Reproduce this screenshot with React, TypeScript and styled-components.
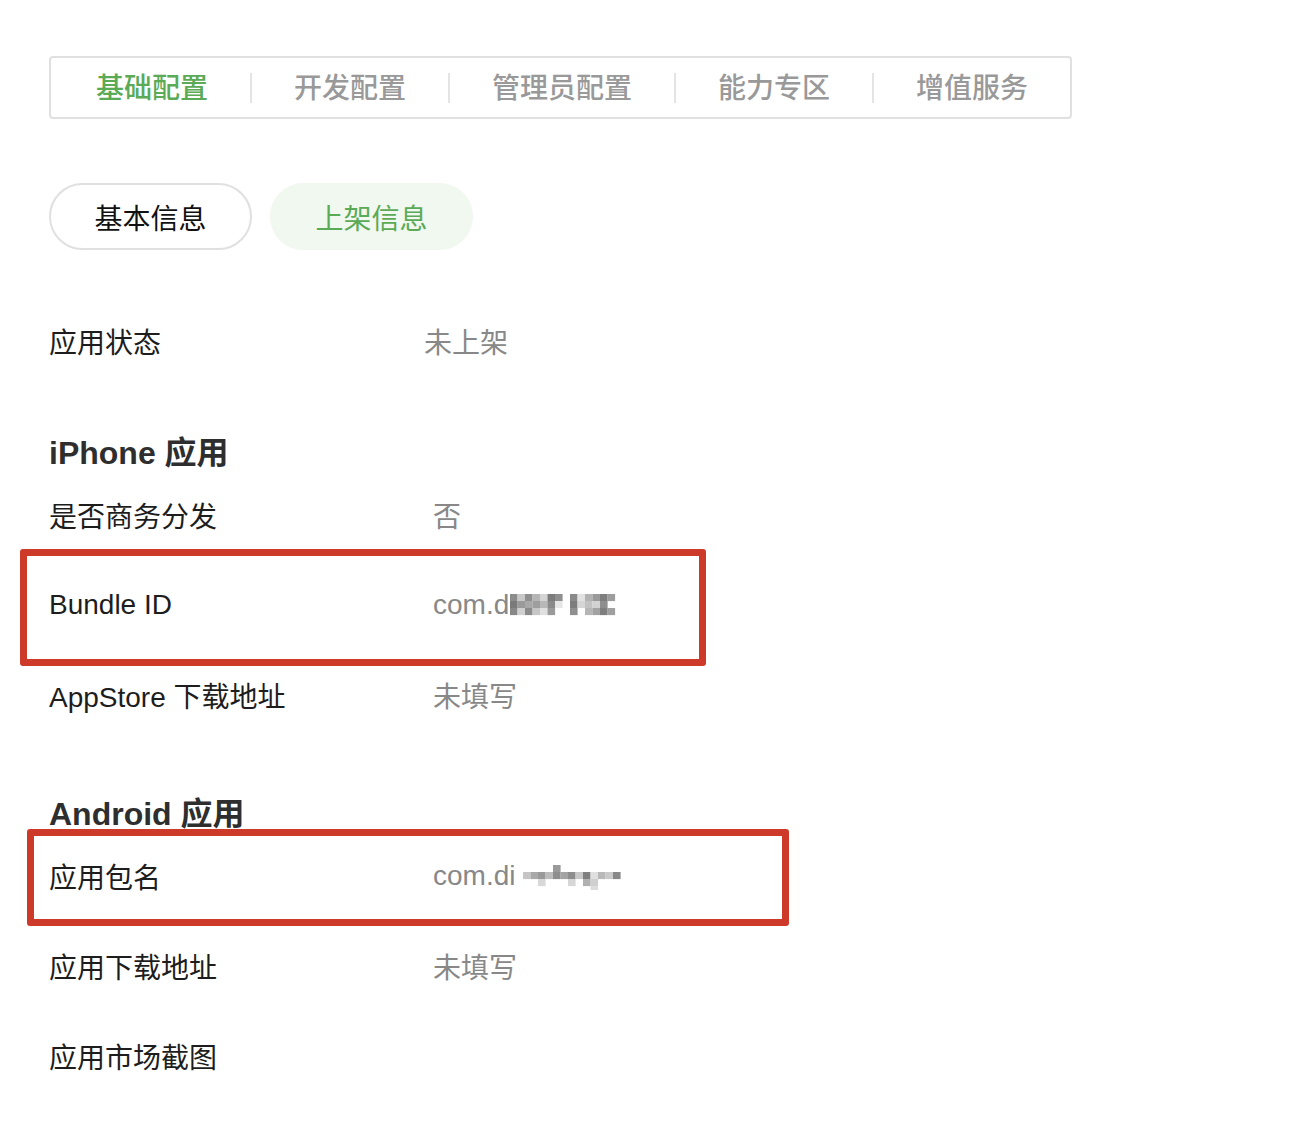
import { Fragment } from 'react';
import styled, { createGlobalStyle } from 'styled-components';

const GlobalStyle = createGlobalStyle`
  html, body {
    margin: 0;
    padding: 0;
    background: #ffffff;
  }
  body {
    font-family: "Liberation Sans", "Noto Sans CJK SC", sans-serif;
    -webkit-font-smoothing: antialiased;
  }
`;

const Page = styled.div`
  position: relative;
  width: 1312px;
  min-height: 1122px;
  padding: 56px 0 0 49px;
  box-sizing: border-box;
`;

const TabBar = styled.div`
  display: flex;
  align-items: center;
  width: 1023px;
  height: 63px;
  box-sizing: border-box;
  border: 2px solid #e0e0e0;
  border-radius: 4px;
  padding: 3px 0 0 3px;
`;

const Tab = styled.div<{ $active?: boolean }>`
  padding: 0 42px;
  font-size: 28px;
  line-height: 34px;
  font-weight: 500;
  color: ${(p) => (p.$active ? '#5aaa56' : '#999999')};
  white-space: nowrap;
`;

const TabDivider = styled.span`
  flex: none;
  width: 2px;
  height: 30px;
  margin-top: -2px;
  background: #e4e4e4;
`;

const PillRow = styled.div`
  display: flex;
  gap: 18px;
  margin-top: 64px;
`;

const Pill = styled.div<{ $active?: boolean }>`
  display: flex;
  align-items: center;
  justify-content: center;
  width: 203px;
  height: 67px;
  box-sizing: border-box;
  border-radius: 34px;
  border: 2px solid ${(p) => (p.$active ? '#f1f8f0' : '#e0e0e0')};
  background: ${(p) => (p.$active ? '#f1f8f0' : '#ffffff')};
  color: ${(p) => (p.$active ? '#5aaa56' : '#111111')};
  font-size: 28px;
`;

const Row = styled.div`
  display: flex;
  align-items: center;
  height: 90px;
`;

const Label = styled.div`
  width: 384px;
  font-size: 28px;
  color: #1d1d1d;
  white-space: nowrap;
`;

const Value = styled.div<{ $shift?: number }>`
  display: flex;
  align-items: center;
  font-size: 28px;
  color: #888888;
  margin-left: ${(p) => p.$shift ?? 0}px;
`;

const Heading = styled.div<{ $gap: number }>`
  margin-top: ${(p) => p.$gap}px;
  font-size: 32px;
  line-height: 34px;
  font-weight: 700;
  color: #2e2e2e;
`;

const Mark = styled.div<{ $x: number; $y: number; $w: number; $h: number }>`
  position: absolute;
  left: ${(p) => p.$x}px;
  top: ${(p) => p.$y}px;
  width: ${(p) => p.$w}px;
  height: ${(p) => p.$h}px;
  box-sizing: border-box;
  border: 7px solid #cd3a29;
  border-radius: 3px;
  pointer-events: none;
`;

const MosaicSvg = styled.svg<{ $gap: number }>`
  display: block;
  margin-left: ${(p) => p.$gap}px;
`;

type Cell = [number, number, string];

const Mosaic = ({ cells, width, gap }: { cells: Cell[]; width: number; gap: number }) => (
  <MosaicSvg $gap={gap} width={width} height={28} viewBox={`0 0 ${width} 28`}>
    {cells.map(([cx, cy, c], i) => (
      <rect key={i} x={cx * 7.5} y={cy * 7 + 3} width={7.6} height={7.1} fill={c} />
    ))}
  </MosaicSvg>
);

const bundleCells: Cell[] = [
  [0, 0, '#8c8c8c'], [0, 1, '#7a7a7a'], [0, 2, '#888888'],
  [1, 0, '#c8c8c8'], [1, 1, '#9a9a9a'], [1, 2, '#d0d0d0'],
  [2, 0, '#8f8f8f'], [2, 1, '#a8a8a8'], [2, 2, '#8b8b8b'],
  [3, 0, '#b5b5b5'], [3, 1, '#9e9e9e'], [3, 2, '#c6c6c6'],
  [4, 0, '#d4d4d4'], [4, 1, '#b8b8b8'], [4, 2, '#e0e0e0'],
  [5, 0, '#7c7c7c'], [5, 1, '#8a8a8a'], [5, 2, '#9a9a9a'],
  [6, 0, '#8f8f8f'], [6, 1, '#e6e6e6'],
  [8, 0, '#8a8a8a'], [8, 1, '#7d7d7d'], [8, 2, '#8f8f8f'],
  [9, 0, '#e2e2e2'], [9, 1, '#d6d6d6'],
  [10, 0, '#b2b2b2'], [10, 1, '#c2c2c2'], [10, 2, '#b6b6b6'],
  [11, 0, '#9a9a9a'], [11, 1, '#d2d2d2'], [11, 2, '#a2a2a2'],
  [12, 0, '#7e7e7e'], [12, 1, '#8e8e8e'], [12, 2, '#7f7f7f'],
  [13, 0, '#9d9d9d'], [13, 2, '#a0a0a0'],
];

const packageCells: Cell[] = [
  [0, 1, '#c6c6c6'], [1, 1, '#a9a9a9'],
  [2, 1, '#9a9a9a'], [2, 2, '#d8d8d8'],
  [3, 1, '#bdbdbd'], [4, 0, '#9a9a9a'], [4, 1, '#8e8e8e'],
  [5, 1, '#a3a3a3'], [6, 1, '#8d8d8d'], [6, 2, '#d6d6d6'],
  [7, 1, '#c8c8c8'], [8, 1, '#7f7f7f'], [8, 2, '#b0b0b0'],
  [9, 1, '#e0e0e0'], [9, 2, '#cfcfcf'], [9, 3, '#dcdcdc'],
  [10, 1, '#b9b9b9'], [11, 1, '#c9c9c9'], [12, 1, '#888888'],
];

const tabs = ['基础配置', '开发配置', '管理员配置', '能力专区', '增值服务'];

export default function App() {
  return (
    <>
      <GlobalStyle />
      <Page>
        <TabBar>
          {tabs.map((t, i) => (
            <Fragment key={t}>
              {i > 0 && <TabDivider />}
              <Tab $active={i === 0}>{t}</Tab>
            </Fragment>
          ))}
        </TabBar>

        <PillRow>
          <Pill>基本信息</Pill>
          <Pill $active>上架信息</Pill>
        </PillRow>

        <Row style={{ marginTop: 46 }}>
          <Label>应用状态</Label>
          <Value $shift={-9}>未上架</Value>
        </Row>

        <Heading $gap={50}>iPhone 应用</Heading>
        <Row>
          <Label>是否商务分发</Label>
          <Value>否</Value>
        </Row>
        <Row>
          <Label>Bundle ID</Label>
          <Value>
            com.d
            <Mosaic cells={bundleCells} width={106} gap={1} />
          </Value>
        </Row>
        <Row>
          <Label>AppStore 下载地址</Label>
          <Value>未填写</Value>
        </Row>

        <Heading $gap={57}>Android 应用</Heading>
        <Row>
          <Label>应用包名</Label>
          <Value>
            com.di
            <Mosaic cells={packageCells} width={98} gap={8} />
          </Value>
        </Row>
        <Row>
          <Label>应用下载地址</Label>
          <Value>未填写</Value>
        </Row>
        <Row>
          <Label>应用市场截图</Label>
        </Row>

        <Mark $x={20} $y={549} $w={686} $h={117} />
        <Mark $x={27} $y={829} $w={762} $h={97} />
      </Page>
    </>
  );
}
